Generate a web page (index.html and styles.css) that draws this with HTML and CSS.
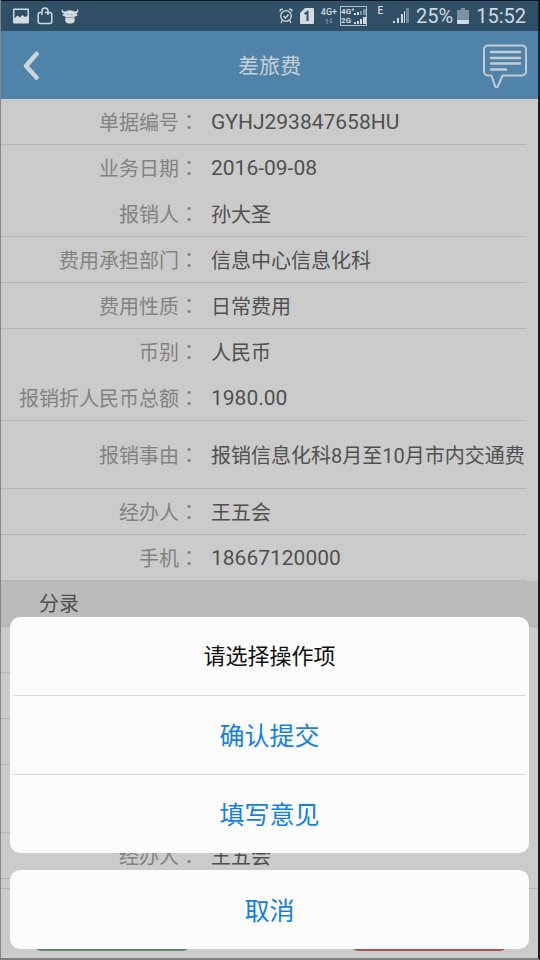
FILE: index.html
```
<!DOCTYPE html>
<html lang="zh-CN">
<head>
<meta charset="utf-8">
<meta name="viewport" content="width=device-width, initial-scale=1">
<title>差旅费</title>
<link rel="stylesheet" href="styles.css">
</head>
<body>
<div class="screen">
  <div class="status">
    <div class="status-group">
      <svg width="16" height="16" viewBox="0 0 16 16"><path fill="currentColor" fill-rule="evenodd" d="M1 0.5h14a1 1 0 0 1 1 1v13a1 1 0 0 1-1 1H1a1 1 0 0 1-1-1v-13a1 1 0 0 1 1-1zM1.500 2v8.500l3-3 2.500 2 2.500-2.500 2.500 2 2.500-1V2z"/></svg>
      <svg width="16" height="18" viewBox="0 0 16 18" fill="none" stroke="currentColor" stroke-width="1.500"><path d="M4 5.500H2.500L1.200 7v7.500a2 2 0 0 0 2 2h9.600a2 2 0 0 0 2-2V7l-1.300-1.500H8"/><path d="M5 8V4a3 3 0 0 1 6 0v4"/></svg>
      <svg width="18" height="16" viewBox="0 0 18 16"><path fill="currentColor" d="M1 0.500C1.500 3 3 4 5 3.200 7.500 2 10.500 2 13 3.200c2 .8 3.500-.2 4-2.700 1 3-.2 4.800-2.500 5.500l2.300.6c-.6 1.600-1.800 2-3.200 1.800l-.2 1.800c1.400 3-.6 5.300-4.400 5.300s-5.800-2.300-4.400-5.300l-.2-1.800C3 8.600 1.800 8.200 1.200 6.600L3.500 6C1.200 5.300 0 3.500 1 .5z"/><path stroke="#7d929f" stroke-width=".8" fill="none" d="M5.500 9.500h7M6.500 6.500h1.500M10 6.500h1.500"/></svg>
    </div>
    <div class="status-group indicators">
      <svg width="14" height="16" viewBox="0 0 14 16" fill="none" stroke="currentColor" stroke-width="1.300"><circle cx="7" cy="8" r="5.300"/><path d="M1 3.500C.8 1.800 2 .9 4 1.300M13 3.500c.2-1.700-1-2.600-3-2.200M4.500 8l2 2 3-3.500M3.200 12.500L2 15M10.800 12.500L12 15"/></svg>
      <svg width="14" height="16" viewBox="0 0 14 16"><path fill="currentColor" d="M5 0h8a1 1 0 0 1 1 1v14a1 1 0 0 1-1 1H1a1 1 0 0 1-1-1V5z"/><path fill="none" stroke="#2f5067" stroke-width="2" d="M4.500 6L7.500 4v9"/></svg>
      <div class="net"><span>4G+</span><svg width="8" height="6" viewBox="0 0 8 6" stroke="#7d929f" fill="none"><path d="M2 6V1M.5 2.500L2 1l1.500 1.500M6 0v5M4.500 3.500L6 5l1.500-1.500"/></svg></div>
      <div class="dual">
        <div class="dual-line"><span>4G⁺</span><svg width="12" height="7" viewBox="0 0 12 7"><path fill="currentColor" d="M0 5h2v2H0zM3 4h2v3H3z"/><path fill="#7d929f" d="M6 3h2v4H6zM9 1h3v6H9z"/></svg></div>
        <div class="dual-line"><span>2G</span><svg width="12" height="7" viewBox="0 0 12 7"><path fill="currentColor" d="M0 5h2v2H0zM3 4h2v3H3zM6 2h2v5H6zM9 0h3v7H9z"/></svg></div>
      </div>
      <span class="edge">E</span>
      <svg width="16" height="16" viewBox="0 0 16 16"><path fill="currentColor" d="M0 13h2v2H0zM4 10h2v5H4zM8 6h2v9H8zM11 3h1v12h-1z"/><path fill="#6f8796" d="M13 0h3v15h-3z"/></svg>
      <span class="clock">25%</span>
      <svg class="battery" width="12" height="16" viewBox="0 0 12 16"><path fill="#7d929f" d="M4 0h4v2h3a1 1 0 0 1 1 1v9H0V3a1 1 0 0 1 1-1h3z"/><path fill="currentColor" d="M0 12h12v3a1 1 0 0 1-1 1H1a1 1 0 0 1-1-1z"/></svg>
      <span class="clock">15:52</span>
    </div>
  </div>

  <header class="header">
    <button class="icon-button" type="button" aria-label="返回">
      <svg class="chevron" width="18" height="30" viewBox="0 0 18 30"><path d="M14.500 3L4 15l10.500 11.500" fill="none" stroke="#cdd3d8" stroke-width="4.500" stroke-linecap="round" stroke-linejoin="round"/></svg>
    </button>
    <h1 class="title">差旅费</h1>
    <button class="icon-button comment" type="button" aria-label="意见">
      <svg width="44" height="44" viewBox="0 0 44 44" fill="none" stroke="#c5cacf" stroke-width="2"><path stroke-linejoin="round" d="M5 1.500h34a4 4 0 0 1 4 4v22a4 4 0 0 1-4 4H19.500L15 42q-1.500 3-3 0L8.500 31.500H5a4 4 0 0 1-4-4v-22a4 4 0 0 1 4-4z"/><path stroke-width="2.500" stroke-linecap="round" d="M8 8h29M8 14h29M8 19.500h29M8 25.500h15"/></svg>
    </button>
  </header>

  <main>
    <dl class="list">
      <div class="row"><dt>单据编号<i lang="zh-TW">：</i></dt><dd class="latin">GYHJ293847658HU</dd></div>
      <div class="row plain"><dt>业务日期<i lang="zh-TW">：</i></dt><dd class="latin">2016-09-08</dd></div>
      <div class="row"><dt>报销人<i lang="zh-TW">：</i></dt><dd>孙大圣</dd></div>
      <div class="row"><dt>费用承担部门<i lang="zh-TW">：</i></dt><dd>信息中心信息化科</dd></div>
      <div class="row"><dt>费用性质<i lang="zh-TW">：</i></dt><dd>日常费用</dd></div>
      <div class="row plain"><dt>币别<i lang="zh-TW">：</i></dt><dd>人民币</dd></div>
      <div class="row"><dt>报销折人民币总额<i lang="zh-TW">：</i></dt><dd class="latin">1980.00</dd></div>
      <div class="row tall"><dt>报销事由<i lang="zh-TW">：</i></dt><dd>报销信息化科8月至10月市内交通费</dd></div>
      <div class="row"><dt>经办人<i lang="zh-TW">：</i></dt><dd>王五会</dd></div>
      <div class="row"><dt>手机<i lang="zh-TW">：</i></dt><dd class="latin">18667120000</dd></div>
    </dl>
    <h2 class="section">分录</h2>
    <dl class="list">
      <div class="row"></div>
      <div class="row"></div>
      <div class="row"></div>
      <div class="row tall"></div>
      <div class="row"><dt>经办人<i lang="zh-TW">：</i></dt><dd>王五会</dd></div>
    </dl>
    <div class="actions">
      <button class="action agree" type="button" aria-label="同意"></button>
      <button class="action reject" type="button" aria-label="驳回"></button>
    </div>
  </main>

  <div class="overlay" role="dialog" aria-labelledby="sheet-title">
    <div class="sheet">
      <h2 class="sheet-title" id="sheet-title">请选择操作项</h2>
      <button class="option" type="button">确认提交</button>
      <button class="option" type="button">填写意见</button>
    </div>
    <div class="sheet">
      <button class="option" type="button">取消</button>
    </div>
  </div>
</div>
</body>
</html>
```

FILE: styles.css
```
* {
  box-sizing: border-box;
}

body {
  margin: 0;
  background: #cbcbcb;
  font-family: Roboto, "Noto Sans CJK SC", sans-serif;
  color: #505050;
}

button {
  margin: 0;
  padding: 0;
  border: 0;
  background: none;
  font: inherit;
}

h1, h2, dl, dd {
  margin: 0;
  font-weight: 400;
}

svg {
  display: block;
  flex: none;
}

.screen {
  position: relative;
  min-height: 100vh;
  overflow: hidden;
  border-left: 1px solid #858585;
  border-right: 2px solid #1c1c1c;
  border-bottom: 2px solid #808080;
}

.status {
  display: flex;
  justify-content: space-between;
  align-items: center;
  height: 31px;
  padding: 0 12px;
  border-top: 1px solid #0a1522;
  background: #2f5067;
  color: #d3dbe0;
}

.status-group {
  display: flex;
  align-items: center;
  gap: 8px;
}

.indicators {
  gap: 7px;
}

.net {
  display: flex;
  flex-direction: column;
  align-items: center;
  gap: 2px;
  font-size: 9px;
  line-height: 8px;
  font-weight: 500;
}

.dual {
  margin-left: -4px;
  border: 1px solid #b4c0c8;
}

.dual-line {
  display: flex;
  justify-content: space-between;
  align-items: center;
  font-size: 8px;
  line-height: 9px;
  font-weight: 700;
}

.edge {
  align-self: flex-start;
  margin: 0 3px;
  font-size: 10px;
  line-height: 14px;
  font-weight: 500;
}

.clock {
  font-size: 20px;
  line-height: 24px;
}

.battery {
  margin-left: -3px;
}

.header {
  display: flex;
  justify-content: space-between;
  align-items: center;
  height: 68px;
  padding: 2px 11px 0;
  background: #5083aa;
}

.icon-button {
  display: flex;
  flex: 1;
}

.chevron {
  margin-left: 10px;
}

.comment {
  justify-content: flex-end;
}

.title {
  color: #c8cfd5;
  font-size: 21px;
  line-height: 30px;
}

.row {
  display: grid;
  grid-template-columns: 198px 1fr;
  column-gap: 12px;
  align-items: center;
  min-height: 46px;
  margin-right: 12px;
  padding-top: 1px;
  border-bottom: 1px solid #b4b4b4;
  font-size: 20px;
  line-height: 30px;
}

.row.plain {
  border-bottom-color: transparent;
}

.row.tall {
  min-height: 68px;
}

.row dt {
  color: #828282;
  text-align: right;
}

.row dt i {
  font-family: "Noto Sans CJK TC", sans-serif;
  font-style: normal;
}

.row dd {
  margin-right: -12px;
  padding-top: 1px;
}

.row .latin {
  padding-top: 0;
  font-size: 21px;
}

.section {
  padding: 8px 38px 7px;
  border-bottom: 1px solid #b1b1b1;
  background: #bbbbbb;
  font-size: 20px;
  line-height: 30px;
}

.actions {
  display: flex;
  justify-content: space-between;
  margin-top: 9px;
  padding: 8px 32px 7px 34px;
  border-top: 1px solid #b1b1b1;
}

.action {
  flex: 0 1 154px;
  height: 54px;
  border-radius: 6px;
}

.agree {
  background: #5f8c6b;
}

.reject {
  background: #b5524f;
}

.overlay {
  position: absolute;
  inset: 0;
  display: flex;
  flex-direction: column;
  justify-content: flex-end;
  gap: 17px;
  padding: 9px;
}

.sheet {
  display: flex;
  flex-direction: column;
  padding: 0 3px;
  border-radius: 10px;
  background: #fcfcfc;
}

.sheet-title {
  padding: 25px 0 23px;
  color: #111111;
  font-size: 22px;
  line-height: 30px;
  text-align: center;
}

.option {
  padding: 26px 0 22px;
  color: #117fe9;
  font-size: 25px;
  line-height: 31px;
}

.sheet-title + .option,
.option + .option {
  padding-top: 25px;
  border-top: 1px solid #d8d8d8;
}
```
